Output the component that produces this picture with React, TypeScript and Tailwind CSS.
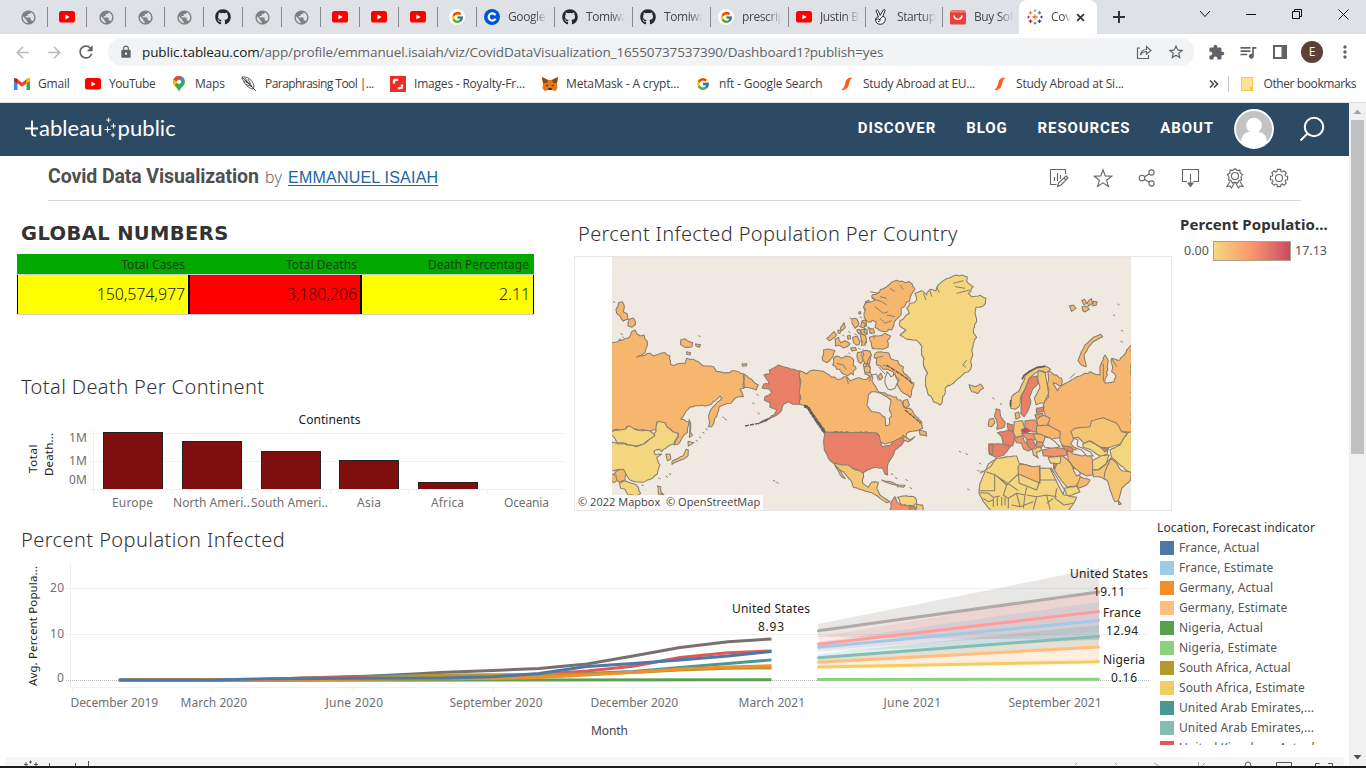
import React from "react";
import { FaGithub } from "react-icons/fa";
import { FcGoogle } from "react-icons/fc";
import {
  MdPublic, MdLock, MdRefresh, MdArrowBack, MdArrowForward, MdStarBorder,
  MdExtension, MdQueueMusic, MdMoreVert,
} from "react-icons/md";

type Pt = [number, number];

/* ---------- browser chrome ---------- */

const Globe = () => <MdPublic className="size-[17px] text-[#808080]" />;
const Tube = () => (
  <svg viewBox="0 0 16 12" className="h-3 w-4"><rect width="16" height="11.6" rx="2.6" fill="#f00" /><path d="M6.4 3.4v5l4.2-2.5z" fill="#fff" /></svg>
);
const Octo = () => <FaGithub className="size-4 text-[#24292e]" />;
const GTab = () => (
  <span className="flex size-4 items-center justify-center rounded-full bg-white"><FcGoogle className="size-[13px]" /></span>
);
const Coursera = () => (
  <svg viewBox="0 0 16 16" className="size-4"><circle cx="8" cy="8" r="8" fill="#0056d2" /><path d="M11.4 6.2A3.6 3.6 0 1 0 11.4 9.8" fill="none" stroke="#fff" strokeWidth="2.2" /></svg>
);
const Bag = () => (
  <svg viewBox="0 0 16 16" className="size-4"><path d="M2 1h12l2 2v11a1.500 1.500 0 0 1-1.500 1.500h-13A1.500 1.500 0 0 1 0 14V3z" fill="#e8413a" /><path d="M2 1h12l2 2.500H0z" fill="#f37b6f" /><path d="M4 6.500c.5 5 7.500 5 8 0" fill="none" stroke="#fff" strokeWidth="1.500" /></svg>
);
const Peace = () => (
  <svg viewBox="0 0 16 16" className="size-4" fill="#fff" stroke="#222" strokeWidth="1" strokeLinejoin="round">
    <path d="M5.500 8L3.200 2.200c-.4-1.300 1.300-1.800 1.800-.7L7.200 6.500 10.300.9c.7-1.100 2.200-.3 1.700.9L9.800 7.500c2 .2 2.800 1.300 2.500 3-.3 2.500-1.800 4.800-5 4.800C4.500 15.300 2.800 13.500 2.600 11c-.1-1.800.9-2.800 2.900-3z" />
    <path d="M3 10.500c1.500-1 3-.8 3.800.5M6.800 11c.3-1.500 1.500-2.800 3-3.500M5 12.800l2.500-1.300" fill="none" />
  </svg>
);
const plus = (x: number, y: number, r: number) => `M${x - r} ${y}h${2 * r}M${x} ${y - r}v${2 * r}`;
const TableauMark = () => (
  <svg viewBox="0 0 16 16" className="size-4 shrink-0" fill="none">
    <path d={plus(8, 8, 2.6)} stroke="#e8762d" strokeWidth="1.4" />
    <path d={plus(3.500, 3.800, 1.800)} stroke="#eb912c" strokeWidth="1.2" />
    <path d={plus(12.500, 3.800, 1.800)} stroke="#5b879b" strokeWidth="1.2" />
    <path d={plus(3.500, 12.200, 1.800)} stroke="#c72035" strokeWidth="1.2" />
    <path d={plus(12.500, 12.200, 1.800)} stroke="#1f457e" strokeWidth="1.2" />
    <path d={plus(8, 1.700, 1.300)} stroke="#7199a6" strokeWidth="1" />
    <path d={plus(8, 14.300, 1.300)} stroke="#5b6591" strokeWidth="1" />
    <path d={plus(1.500, 8, 1.300)} stroke="#7a4a5a" strokeWidth="1" />
    <path d={plus(14.500, 8, 1.300)} stroke="#1f457e" strokeWidth="1" />
  </svg>
);

const smallTabs = [Globe, Tube, Globe, Globe, Globe, Octo, Globe, Globe, Tube, Tube, Tube, GTab];
const wideTabs = [
  { I: Coursera, t: "Google", w: "w-[78px]" }, { I: Octo, t: "Tomiwa", w: "w-[78px]" }, { I: Octo, t: "Tomiwa", w: "w-[78px]" },
  { I: GTab, t: "prescrip", w: "w-[78px]" }, { I: Tube, t: "Justin B", w: "w-[77px]" }, { I: Peace, t: "Startup", w: "w-[77px]" },
  { I: Bag, t: "Buy Sof", w: "w-[76px]" },
];

const TabStrip = () => (
  <div className="flex h-[34px] items-stretch bg-[#dee1e6] pl-[9px] text-[12px] text-[#45494d]">
    {smallTabs.map((I, i) => (
      <div key={i} className="flex w-[39px] shrink-0 items-center justify-center">
        <span className="ml-auto mr-auto"><I /></span>
        <span className="h-5 w-px bg-[#85888c]" />
      </div>
    ))}
    {wideTabs.map(({ I, t, w }, i) => (
      <div key={i} className={`flex shrink-0 items-center pl-[7px] ${w}`}>
        <span className="w-4 shrink-0"><I /></span>
        <span className="ml-2 w-[42px] whitespace-nowrap tracking-[-0.4px] [mask-image:linear-gradient(90deg,#000_60%,transparent_94%)]">{t}</span>
        {i < 6 && <span className="ml-auto h-5 w-px bg-[#85888c]" />}
      </div>
    ))}
    <div className="flex w-[78px] shrink-0 items-center rounded-t-lg bg-white pl-2">
      <TableauMark />
      <span className="ml-2 w-[22px] whitespace-nowrap tracking-[-0.3px] [mask-image:linear-gradient(90deg,#000_60%,transparent_90%)]">Cov</span>
      <svg viewBox="0 0 10 10" className="ml-[3px] size-[9px]" stroke="#333" strokeWidth="1.900"><path d="M1.200 1.200l7.600 7.600M8.800 1.200L1.200 8.800" /></svg>
    </div>
    <div className="flex w-11 items-center justify-center"><svg viewBox="0 0 12 12" className="size-3" stroke="#333" strokeWidth="2"><path d="M0 6h12M6 0v12" /></svg></div>
    <svg viewBox="1141 0 225 34" className="ml-auto w-[225px]" fill="none" stroke="#111" strokeWidth="1">
      <path d="M1200 11l5 5.500 5-5.500M1246 14.500h10M1292.500 11.500h7v7h-7zM1294.500 11.500v-2h7v7h-2M1338.500 9.500l10 10M1348.500 9.500l-10 10" />
    </svg>
  </div>
);

const Toolbar = () => (
  <div className="flex h-[36px] items-center pl-[13px] text-[#5f6368]">
    <MdArrowBack className="size-[19px] text-[#b8bbbe]" />
    <MdArrowForward className="ml-[13px] size-[19px] text-[#b8bbbe]" />
    <MdRefresh className="ml-[12px] size-5" />
    <div className="ml-[12px] flex h-7 w-[1086px] items-center rounded-full bg-[#f1f3f4] pl-[11px]">
      <MdLock className="size-[14px]" />
      <span className="ml-[9px] whitespace-nowrap text-[13.500px] tracking-[-0.115px]"><span className="text-[#202124]">public.tableau.com</span>/app/profile/emmanuel.isaiah/viz/CovidDataVisualization_16550737537390/Dashboard1?publish=yes</span>
      <svg viewBox="0 0 16 16" className="ml-auto size-4" fill="none" stroke="#5f6368" strokeWidth="1.200"><path d="M4 4H1.500v10.500h11V11M4.500 11C5 7 8 5.500 10.500 5.500V2.500L15 6.500 10.500 10V7.500C8 7.500 6 8.500 4.500 11z" /></svg>
      <MdStarBorder className="ml-[15px] mr-[9px] size-[18px]" />
    </div>
    <MdExtension className="ml-[14px] size-[17px]" />
    <MdQueueMusic className="ml-[13px] size-5" />
    <svg viewBox="0 0 14 14" className="ml-[15px] size-[14px]"><path d="M1 1h12v12H1z" fill="none" stroke="#5f6368" strokeWidth="2" /><path d="M8.500 0H14v14H8.500z" fill="#5f6368" /></svg>
    <span className="ml-[14px] flex size-[22px] items-center justify-center rounded-full bg-[#5d4037] text-[12px] text-white">E</span>
    <MdMoreVert className="ml-[12px] size-5" />
  </div>
);

const Gmail = () => (
  <svg viewBox="0 0 16 12" className="h-3 w-4"><path d="M0 1.500V12h3.500V4z" fill="#4285f4" /><path d="M16 1.500V12h-3.500V4z" fill="#34a853" /><path d="M0 1.500C0 0 2 0 3 .8l5 4 5-4C14 0 16 0 16 1.500V3L8 8.800 0 3z" fill="#ea4335" /><path d="M12.500 1.200C14 0 16 0 16 1.500V3l-3.500 2.600z" fill="#fbbc04" /><path d="M0 1.500V3l3.500 2.600V1.200C2 0 0 0 0 1.500z" fill="#c5221f" /></svg>
);
const MapPin = () => (
  <svg viewBox="0 0 12 16" className="h-4 w-3"><path d="M6 0a6 6 0 0 1 6 6c0 4-5 5-6 10C5 11 0 10 0 6a6 6 0 0 1 6-6z" fill="#34a853" /><path d="M6 0C3 0 1 1.500.4 3.800L3.500 6.500 9 .8A6 6 0 0 0 6 0z" fill="#ea4335" /><path d="M9 .8L4 7l4-1 3.500-3A6 6 0 0 0 9 .8z" fill="#4285f4" /><path d="M.4 3.800C-.4 6.500.4 8.200 1.500 9.500L5 6z" fill="#fbbc04" /><circle cx="6" cy="5.800" r="2.100" fill="#fff" /></svg>
);
const Quill = () => (
  <svg viewBox="0 0 16 16" className="size-4" fill="none" stroke="#333" strokeWidth=".8"><path d="M1 1c5-.5 11 2 12 10l-1 2C7 12 3 8 1 1zM1 1l14 14M4 2l4 6M7 3l4 8M3 5l6 3M5 8.500l6 2" /></svg>
);
const Shutter = () => (
  <svg viewBox="0 0 16 16" className="size-4"><path d="M0 0h16v16H0z" fill="#ee2b24" /><path d="M4 7.500V5q0-1.200 1.200-1.200h3M12 8.500V11q0 1.200-1.200 1.200h-3" fill="none" stroke="#fff" strokeWidth="2.300" /></svg>
);
const Fox = () => (
  <svg viewBox="0 0 16 14" className="h-[14px] w-4"><path d="M0 0l6 3h4l6-3-1 6 .5 5-2 3-4-1H6.500l-4 1-2-3L1 6z" fill="#e2761b" /><path d="M0 0l6 3-1 3-4 0zM16 0l-6 3 1 3 4 0z" fill="#8a4717" /><path d="M3.500 7.500l3 1-1.500 1zM12.500 7.500l-3 1 1.500 1z" fill="#233447" /><path d="M6.500 11h3l.5 2H6z" fill="#333" /></svg>
);
const Flash = () => (
  <svg viewBox="0 0 12 14" className="h-[14px] w-3"><path d="M10.500 1C6.500 1.300 5 3 5 5.500L4 8.500C3.500 10 2.500 11.500 1 12.800 4.500 12.300 6.800 11 7 8.500L8 5.500C8.300 3.800 9 2.500 10.500 1z" fill="#ff5c1a" stroke="#ff5c1a" /></svg>
);

const Bookmark = ({ children, label, cls }: { children: React.ReactNode; label: string; cls: string }) => (
  <div className={`flex shrink-0 items-center whitespace-nowrap ${cls}`}>{children}<span className="ml-[8px]">{label}</span></div>
);
const Bookmarks = () => (
  <div className="flex h-[33px] items-center border-b border-[#dadce0] pb-1 pl-[14px] text-[12px] tracking-[-0.2px] text-[#3c4043]">
    <Bookmark label="Gmail" cls="w-[71px]"><Gmail /></Bookmark>
    <Bookmark label="YouTube" cls="w-[88px] tracking-[-0.45px]"><Tube /></Bookmark>
    <Bookmark label="Maps" cls="w-[68px] [&>span]:ml-[10px]"><MapPin /></Bookmark>
    <Bookmark label="Paraphrasing Tool |..." cls="w-[149px] tracking-[-0.55px]"><Quill /></Bookmark>
    <Bookmark label="Images - Royalty-Fr..." cls="w-[152px]"><Shutter /></Bookmark>
    <Bookmark label="MetaMask - A crypt..." cls="w-[154px] tracking-[-0.15px]"><Fox /></Bookmark>
    <Bookmark label="nft - Google Search" cls="w-[145px] tracking-[-0.15px] [&>span]:ml-[9px]"><FcGoogle className="size-[14px]" /></Bookmark>
    <Bookmark label="Study Abroad at EU..." cls="w-[153px] tracking-[-0.28px] [&>span]:ml-[10px]"><Flash /></Bookmark>
    <Bookmark label="Study Abroad at Si..." cls="tracking-[-0.2px] [&>span]:ml-[10px]"><Flash /></Bookmark>
    <svg viewBox="0 0 10 8" className="ml-auto h-2 w-[10px]" fill="none" stroke="#444" strokeWidth="1.500"><path d="M1 .5L4.500 4 1 7.500M5 .5L8.500 4 5 7.500" /></svg>
    <span className="ml-[9px] h-4 w-px bg-[#c8cace]" />
    <svg viewBox="0 0 12 14" className="ml-[12px] h-[14px] w-3"><path d="M.5.500h11v13H.5z" fill="#fde293" stroke="#f2c94c" /><path d="M9 10h3v4H9z" fill="#f2c94c" /></svg>
    <span className="ml-[10px] mr-[10px] tracking-[-0.4px]">Other bookmarks</span>
  </div>
);

/* ---------- tableau public header ---------- */

const Header = () => (
  <header className="flex h-[53px] items-center bg-[#2d4a64] pl-[25px] text-white">
    <div className="flex items-center pb-[3px] font-['Lato',sans-serif] text-[22px] leading-none">
      <svg viewBox="25 118 13 20" className="h-5 w-[13px]"><path d="M25 128.500h13M32 120.500v12.500q0 2.600 2.800 2.600h1.500" stroke="#fff" strokeWidth="1.900" fill="none" /></svg>
      <span className="ml-px tracking-[0.05px]">ableau</span>
      <svg viewBox="105 113 14 24" className="ml-px h-6 w-[14px] self-start" stroke="#fff" strokeWidth="1.100"><path d={plus(109.500, 117, 2.200) + plus(108.500, 126.500, 3) + plus(114.500, 123, 2.400) + plus(114, 132, 2.200)} /></svg>
      <span className="tracking-[0.05px]">public</span>
    </div>
    <nav className="ml-auto flex gap-[30px] pb-[3px] font-['Roboto',sans-serif] text-[15px] font-bold tracking-[0.9px]">
      <span>DISCOVER</span><span>BLOG</span><span>RESOURCES</span><span>ABOUT</span>
    </nav>
    <svg viewBox="0 0 40 40" className="mb-[2px] ml-[20px] size-10"><circle cx="20" cy="20" r="19" fill="#c3c3c3" stroke="#fff" strokeWidth="1.800" /><circle cx="20" cy="16.500" r="7.800" fill="#fff" /><path d="M7 33c1-8 4-9 8-10h10c4 1 7 2 8 10q-6 6-13 6T7 33z" fill="#fff" /></svg>
    <svg viewBox="0 0 26 26" className="mb-[2px] ml-[25px] mr-[24px] size-[26px]" fill="none" stroke="#fff" strokeWidth="2"><circle cx="15" cy="11" r="9.200" /><path d="M8.500 17.500L1.500 24.500" /></svg>
  </header>
);

const star = (cx: number, cy: number, R: number, r: number, n: number) =>
  Array.from({ length: n * 2 }, (_, i) => {
    const a = (i * Math.PI) / n - Math.PI / 2;
    const q = i % 2 ? r : R;
    return `${(cx + q * Math.cos(a)).toFixed(1)},${(cy + q * Math.sin(a)).toFixed(1)}`;
  }).join(" ");

const gear = () => {
  const p: string[] = [];
  for (let i = 0; i < 8; i++)
    for (const [o, r] of [[-0.2, 8.800], [0.2, 8.800], [0.28, 6.900], [0.5, 6.900]] as Pt[]) {
      const a = (i * Math.PI) / 4 + o;
      p.push(`${(1279 + r * Math.cos(a)).toFixed(1)},${(178 + r * Math.sin(a)).toFixed(1)}`);
    }
  return p.join(" ");
};

const TitleRow = () => (
  <div className="ml-12 mr-12 flex h-[45px] items-start border-b border-[#d8d8d8] font-['Liberation_Sans',Arial,sans-serif]">
    <div className="flex w-[400px] items-baseline whitespace-nowrap pt-[8px]">
      <h1 className="w-[211px] font-['Roboto',sans-serif] text-[19.500px] font-bold leading-[25px] tracking-[-0.1px] text-[#4f4f4f]">Covid Data Visualization</h1>
      <span className="ml-[6px] w-[18px] font-['Open_Sans',sans-serif] text-[16px] font-light text-[#555]">by</span>
      <a className="ml-[5px] text-[16px] tracking-[0.22px] text-[#1b66a3] underline underline-offset-2">EMMANUEL ISAIAH</a>
    </div>
    <svg viewBox="1045 156 256 44" className="ml-auto h-11 w-64" fill="none" stroke="#666" strokeWidth="1.100">
      <path d="M1065.500 174v-4.500h-15v15h6M1054.500 181v-4M1057.500 181v-8M1060.500 179v-4M1066 176l2 2-7 7-3.500 1.500 1-3.500zM1064 178l2 2" />
      <polygon points={star(1103, 179, 9.200, 3.800, 5)} />
      <circle cx="1142" cy="178" r="2.800" /><circle cx="1151.500" cy="172.500" r="2.600" /><circle cx="1151.500" cy="183.500" r="2.600" /><path d="M1144.500 176.700l4.700-2.700M1144.500 179.500l4.700 2.700" />
      <path d="M1187 181.500h-4.500v-12h16v12h-5M1190.500 174v10" /><path d="M1188 183h5l-2.500 3.500z" fill="#666" />
      <polygon points={star(1235, 176, 7.600, 6, 9)} /><circle cx="1235" cy="176" r="3.500" /><path d="M1230 181.500l-3 5 3-.5 1.500 2 3-5.500M1240 181.500l3 5-3-.5-1.500 2-3-5.500" />
      <polygon points={gear()} /><circle cx="1279" cy="178" r="3.500" />
    </svg>
  </div>
);

/* ---------- map ---------- */

const parse = (s: string): Pt[] => s.trim().split(/\s+/).map((p) => p.split(",").map(Number) as Pt);

/* Breaks straight coast segments into short wobbling ones. */
const coast = (s: string, amp = 3, step = 8): string => {
  const pts = parse(s);
  let seed = pts.length * 7919 + Math.round(pts[0][0] * 31 + pts[0][1]);
  const rnd = () => {
    seed = (seed * 1103515245 + 12345) & 0x7fffffff;
    return seed / 0x7fffffff - 0.5;
  };
  const out: string[] = [];
  pts.forEach(([x, y], i) => {
    const [nx, ny] = pts[(i + 1) % pts.length];
    const n = Math.max(1, Math.floor(Math.hypot(nx - x, ny - y) / step));
    out.push(`${x},${y}`);
    for (let k = 1; k < n; k++)
      out.push(`${(x + ((nx - x) * k) / n + rnd() * amp * 2).toFixed(1)},${(y + ((ny - y) * k) / n + rnd() * amp * 2).toFixed(1)}`);
  });
  return out.join(" ");
};

const O = "#f6b66e", Y = "#f3d67e", M = "#f4c575", R = "#e97f66", S = "#f1946a", SEA = "#f0e9e2";

const west: [string, string, number?][] = [
  [O, "120,284 150,270 175,265 185,245 195,240 210,258 222,255 232,275 228,295 225,308 200,322 240,310 250,318 285,308 300,318 302,343 312,347 320,342 345,340 350,325 385,335 400,348 430,350 440,365 480,368 485,362 505,365 521,372 521,415 510,418 520,440 495,445 482,460 460,465 448,470 440,500 425,530 416,530 418,490 430,470 455,445 450,438 425,462 405,468 360,470 345,490 332,508 356,515 352,548 325,582 312,584 325,560 325,550 308,545 290,530 285,518 262,515 258,540 240,545 200,538 170,530 165,538 130,540 120,540", 2.5],
  [O, "521,372 545,388 550,395 565,405 558,420 545,415 525,412 521,415", 2],
  [O, "357,508 362,520 361,545 367,556 358,562 360,530", 1],
  [Y, "120,575 140,580 180,585 200,590 225,580 245,560 258,545 258,530 262,515 285,518 290,530 308,545 325,552 312,582 295,588 275,605 268,598 252,603 255,614 275,612 260,622 270,645 262,672 240,688 215,697 195,695 180,690 165,670 150,658 120,662", 1.5],
  [Y, "120,548 135,540 165,538 175,528 200,540 240,543 255,556 238,568 220,583 200,588 165,580 140,578 130,560", 1.5],
  [M, "288,613 300,612 302,628 292,632", 1], [M, "354,574 372,578 355,588", 1], [M, "348,598 355,600 354,617 340,628 320,635 306,643 306,634 325,625 340,617", 1.500],
  [O, "140,662 160,658 168,672 165,690 150,698 140,690 130,675", 2], [Y, "148,700 165,692 185,700 205,712 212,730 195,738 175,735 165,718 152,715", 3], [M, "262,708 272,710 272,725 282,735 266,733", 2],
  [O, "120,668 138,676 142,692 132,698 120,690", 2],
  [O, "146,158 156,155 163,172 160,185 172,192 175,208 160,214 150,198 140,190 138,178", 3], [O, "178,208 190,204 197,222 186,232 174,228", 2],
  [O, "332,270 345,266 355,274 368,278 366,290 345,292 332,284", 2], [O, "376,282 392,284 388,292 378,288", 1], [O, "350,305 362,308 360,315 350,313", 1], [O, "516,342 530,341 530,347 518,349", 1],
  [R, "582,375 600,372 598,360 625,345 640,350 655,354 690,363 690,463 668,463 655,455 642,462 632,485 615,498 590,512 565,522 590,508 612,495 622,480 600,472 600,458 583,450 585,440 605,430 600,418 576,414 582,402 598,402 590,388", 2],
  [O, "690,363 710,372 730,360 750,362 770,370 800,388 830,380 840,392 860,385 890,388 900,378 885,372 882,340 898,345 910,400 925,425 970,440 992,450 1000,470 1020,475 1032,492 1055,515 1058,535 1035,542 1010,550 1004,566 985,568 970,575 945,582 930,575 928,558 915,548 765,547 755,528 735,508 720,482 705,468 690,463", 3],
  [R, "765,547 915,548 928,558 936,590 960,586 970,575 995,562 1008,566 995,585 975,600 970,615 955,638 952,655 953,675 945,672 938,655 915,652 892,660 878,670 865,662 850,655 835,658 815,645 790,640 775,625 763,600 761,570", 1],
  [M, "792,640 815,645 835,645 850,657 868,662 880,670 878,700 895,712 905,696 925,697 920,715 930,735 960,755 950,758 930,745 905,728 878,720 850,712 843,692 820,665 800,655", 1.500],
  [M, "794,645 805,655 814,668 826,686 815,680", 1],
  [O, "760,300 775,297 795,302 790,318 780,330 772,338 758,332", 3],
  [O, "790,325 800,318 815,325 830,318 848,326 856,350 850,375 820,372 800,358 788,345", 5],
  [O, "770,265 792,245 800,255 785,268 778,272", 3], [O, "795,268 806,262 812,278 825,272 840,282 820,294 805,286 796,288", 4],
  [O, "812,232 822,218 826,232 812,244", 3], [O, "804,240 812,242 810,250 804,249", 1],
  [O, "846,206 858,205 866,225 855,235 846,220", 4], [O, "848,262 862,258 870,272 862,286 852,280", 5], [O, "832,258 840,256 842,266 834,268", 2],
  [O, "862,308 876,305 880,326 872,340 862,325", 4], [O, "860,240 868,238 874,248 866,252", 2], [O, "876,212 886,210 890,228 880,230", 3],
  [O, "886,155 897,151 902,168 900,190 888,195 882,175", 5],
  [O, "885,308 900,304 902,325 898,342 884,338", 4], [O, "884,350 898,348 898,368 886,368", 3],
  [O, "872,240 886,236 892,252 880,258 874,250", 3], [O, "874,264 886,262 890,278 878,282", 3], [O, "866,186 872,185 872,192 867,192", 1], [O, "842,294 856,292 860,300 846,303", 2],
];

const east: [string, string, number?][] = [
  [O, "35,140 62,118 78,112 95,97 125,93 155,100 165,117 150,145 130,172 122,195 102,218 95,240 70,245 45,232 48,215 22,215 12,190 18,158 45,150", 5],
  [O, "5,215 16,222 12,234 2,230", 3], [O, "28,262 55,258 75,250 92,258 82,272 84,292 60,296 35,290", 4], [O, "24,232 40,236 44,248 30,250", 3],
  [O, "2,252 18,260 16,285 4,286", 4], [O, "14,236 22,240 20,250 12,247", 2],
  [O, "8,304 28,303 35,315 24,330 20,345 10,330", 4],
  [O, "45,312 62,305 85,308 102,330 130,350 140,375 162,400 155,420 150,443 132,430 116,412 110,400 118,390 102,378 92,362 70,358 50,345", 5],
  [O, "130,452 142,448 148,465 138,475 130,466", 3], [O, "55,378 62,370 68,382 60,390", 3],
  [Y, "118,225 130,207 148,190 140,175 150,160 170,150 165,130 185,122 200,135 210,118 228,122 240,100 250,92 265,85 290,75 322,80 320,95 340,110 325,130 335,140 360,136 378,145 370,168 348,172 345,190 350,215 340,238 350,262 340,280 335,300 335,345 325,365 295,385 280,400 255,415 248,440 240,465 220,455 205,435 197,400 203,370 190,340 186,290 170,270 140,268 120,255 138,240", 4],
  [M, "327,404 345,410 362,402 371,415 352,431 335,425", 2.5],
  [O, "178,540 198,545 200,558 180,555", 2], [O, "128,555 150,570 165,560 145,575 130,570", 2],
  [S, "92,760 105,740 112,758 125,766 145,765 150,785 92,785", 2], [Y, "112,742 130,738 165,742 170,758 160,768 125,765", 2], [M, "170,762 188,765 190,785 165,785", 2], [R, "150,768 165,770 168,785 150,785"], [M, "65,690 95,696 112,706 95,703", 1], [M, "112,704 135,706 130,712 112,710", 1],
  [O, "665,346 654,332 664,305 675,285 700,262 722,253 728,260 700,275 685,292 672,315 678,350", 1.500],
  [O, "628,168 640,165 648,175 635,184", 3], [O, "665,152 674,148 680,160 672,164", 4], [O, "682,158 694,146 698,160 686,168", 4], [O, "666,170 680,168 688,178 674,186", 4], [O, "700,154 712,156 708,166 698,168", 3],
  [O, "565,362 605,385 603,408 580,398 592,422 620,398 660,378 690,365 720,375 722,345 735,315 745,332 742,375 735,400 762,395 768,380 755,365 755,325 780,330 800,300 815,284 815,550 790,545 775,540 640,565 648,600 610,590 600,572 600,545 570,530 555,500 550,465 566,440", 3],
  [M, "450,460 455,440 475,425 490,395 500,372 525,355 555,348 572,358 558,368 540,362 525,370 508,385 500,405 486,432 480,465 465,478 453,475", 2.5],
  [R, "510,383 530,378 535,400 520,415 508,440 513,455 505,480 492,500 482,490 485,440 500,405", 1],
  [M, "535,362 555,368 566,430 552,458 528,464 523,445 540,412 533,385", 1],
  [R, "386,582 430,582 452,590 432,615 408,622 388,612", 1], [R, "388,585 400,585 396,615 388,612"],
  [R, "412,548 430,545 448,540 466,555 462,575 458,588 430,582 425,560", 1], [R, "442,520 460,525 460,545 445,540", 2],
  [S, "408,476 420,480 422,500 436,518 432,532 410,538 412,520 404,500", 2], [O, "388,508 400,505 405,518 395,530 385,528", 2],
  [M, "462,515 488,512 495,540 490,558 468,562 460,548", 1], [O, "465,490 476,486 480,502 468,508", 2],
  [S, "495,512 525,510 533,525 530,545 508,542 494,532", 1], ["#c94a5e", "483,540 497,533 512,542 500,549 488,548"],
  [S, "462,565 488,558 492,572 515,598 505,603 492,598 485,580 470,578", 2], [S, "485,550 530,550 525,570 500,568", 1], [R, "500,570 515,567 528,585 520,602 505,590", 2], [O, "520,553 545,552 562,565 552,578 530,575", 1], [S, "530,575 550,578 545,592 528,592", 1], [M, "516,598 542,592 545,600 530,606 535,625 520,615", 3],
  [S, "525,495 548,490 548,508 530,510", 1], [R, "530,474 552,470 550,485 530,490", 2], [O, "530,508 550,496 570,505 562,528 535,528", 1], [O, "530,528 565,526 600,545 600,562 575,568 560,560 530,548", 1],
  [S, "548,600 575,592 620,598 620,615 595,620 550,618", 1], [R, "605,585 635,592 640,605 620,605", 1],
  [M, "632,545 645,535 690,530 695,512 730,503 770,520 785,545 803,548 780,582 740,595 718,590 690,572 672,580 655,562 640,565", 1],
  [Y, "815,545 803,548 780,585 750,600 755,622 775,640 815,672", 1], [Y, "668,582 690,574 722,592 745,595 742,612 722,620 690,598 670,592", 1], [R, "722,592 745,597 735,606"],
  [O, "622,600 640,612 665,618 690,612 702,640 698,675 680,678 655,665 640,650 625,632", 1],
  [Y, "698,632 722,618 748,615 738,642 715,660 697,658", 1], [M, "697,660 715,660 738,642 752,625 762,640 735,668 740,690 718,680 700,680", 1],
  [M, "752,625 770,640 782,660 815,668 812,690 785,715 775,752 765,755 750,720 742,692 732,685 735,665", 1], [M, "775,752 784,762 776,764"],
  [M, "585,620 608,618 625,632 640,655 665,685 650,708 620,712 600,685 580,655", 1], [O, "662,680 690,690 680,705 655,715 650,706", 2], [Y, "612,715 650,708 660,725 622,740", 1], [Y, "565,622 602,618 600,640 572,640", 1], [R, "580,640 590,642 584,658"],
  [Y, "385,642 410,625 470,618 478,640 500,645 530,655 575,655 590,690 612,735 650,742 640,762 620,790 400,790 370,755 357,730 360,700 372,672", 1],
  [O, "474,650 480,642 500,645 515,650 538,648 540,700 475,672"],
];

const waters = "895,435 905,425 925,428 950,440 962,450 958,480 965,498 958,505 958,525 947,527 945,502 930,490 905,485 890,465";
const borders = "M378 665L408 676 475 722M408 625L392 650 360 670M404 676V722H360M475 672L440 705 408 676M540 645V690H590M540 690L530 720 478 700 475 672M440 706L430 735 445 745 470 730 495 735 500 712M420 738L400 742 385 730 360 728M400 742V770M412 742V768M425 740V768M435 742V766M445 745V775M470 732L480 768M495 735L490 775M500 735L530 740 560 735 590 740M530 740L520 778M560 735L570 778M590 715L585 745 612 765 640 760M580 745L560 760M370 745L385 755 400 750M455 765L480 770 520 755";

const specks: [number, number][] = [
  [132, 156], [155, 252], [160, 262], [150, 268], [388, 258], [550, 460], [566, 490], [562, 434], [460, 502], [467, 508], [410, 538], [400, 548], [390, 562], [380, 572], [300, 672], [290, 680], [612, 692], [622, 698], [268, 685], [218, 706],
  [820, 256], [838, 246], [856, 252], [870, 230], [838, 310], [868, 296], [880, 300], [905, 250], [908, 296], [900, 236], [912, 262], [842, 205], [872, 202],
  [1270, 445], [1293, 462], [1170, 605], [1190, 612], [1225, 662], [1235, 664], [1195, 718], [1022, 714], [1645, 163], [1632, 196], [1656, 242], [1655, 275], [1230, 640], [1010, 690], [978, 684], [966, 672],
];

const Poly = ({ d, dx = 0 }: { d: [string, string, number?]; dx?: number }) => (
  <polygon points={d[2] ? coast(d[1], d[2]) : d[1]} fill={d[0]} transform={dx ? `translate(${dx} 0)` : undefined} />
);

const WorldMap = () => (
  <svg viewBox="575 257 596 253" className="h-full w-full">
    <defs><clipPath id="tiles"><rect x="612" y="257" width="519" height="253" /></clipPath></defs>
    <rect x="612" y="257" width="519" height="253" fill={SEA} />
    <g clipPath="url(#tiles)">
      <g transform="translate(570 250) scale(.33333)" stroke="#8a7f6e" strokeWidth="3.200" strokeLinejoin="round">
        {west.map((d, i) => <Poly key={i} d={d} />)}
        {east.map((d, i) => <Poly key={i} d={d} dx={870} />)}
        <g fill={SEA}>
          <polygon points={coast(waters, 2)} />
          <polygon points={coast("950,365 962,380 975,370 985,395 975,415 955,418 945,400", 4)} />
          <polygon points={coast("1425,562 1440,564 1455,575 1470,590 1450,594 1425,592 1418,582", 1)} />
          <polygon points={coast("1512,565 1524,570 1522,588 1530,592 1560,605 1570,618 1550,618 1535,600 1512,592 1502,580", 1)} />
          <polygon points="1508,652 1525,662 1532,672 1520,678 1512,664" />
          <polygon points="1440,655 1450,665 1484,720 1478,732 1462,700" />
        </g>
        <path d={borders} transform="translate(870 0)" fill="none" />
        <g fill="none" stroke="#655d58">
          <path d="M703 468L714 472 722 486 735 505 748 524 764 548" strokeWidth="9" strokeDasharray="11 1.500" />
          <path d="M703 468L714 472 722 486 735 505 748 524 764 548" strokeWidth="4" />
          <path d="M950 345L985 368 1010 385 1028 402" strokeWidth="4" strokeDasharray="14 2" />
          <path d="M1356 388L1362 376 1380 363 1400 353 1425 349" strokeWidth="5" />
          <path d="M1322 450V470" strokeWidth="5" />
          <path d="M525 528L565 520 600 505" strokeWidth="4" strokeDasharray="12 3" />
          <path d="M1005 480L1030 500 1052 520" strokeWidth="4" strokeDasharray="12 2" />
        </g>
        <g fill="none" strokeWidth="3">
          <path d="M898 395L905 375 920 372 925 392M830 382L835 402M905 145L935 155 950 165M915 170L940 190 955 185M930 205L945 220 965 212M1060 130L1068 150M1080 122L1085 140M1100 110L1108 128M1150 100L1180 92M1155 110L1185 115M1160 130L1200 120M1190 330L1178 345 1188 352M1060 345L1072 370M915 325L940 318M938 345L960 352M1600 340V395M1625 325L1640 350M1500 385L1515 370M900 125L925 130M960 115L975 125M990 105L1000 118M930 140L950 145M950 195L975 200M925 350L945 372M800 340L820 345 830 360" />
        </g>
        {specks.map(([x, y], i) => <path key={i} d={`M${x - 3} ${y - 1}l4 1 2 3`} fill="none" strokeWidth="3" />)}
      </g>
    </g>
  </svg>
);

/* ---------- charts ---------- */

type LabelProps = { x: number; y: number; w: number; children: string; fill?: string; size?: number };
const Label = ({ x, y, w, children, fill = "#707070", size = 12 }: LabelProps) => (
  <text x={x} y={y} textLength={w} fontSize={size} fill={fill}>{children}</text>
);

const bars = [
  { x: 103, top: 432.500, label: "Europe", lx: 112, w: 41 },
  { x: 182, top: 441.500, label: "North Ameri..", lx: 173, w: 77 },
  { x: 261, top: 451.500, label: "South Ameri..", lx: 251, w: 77 },
  { x: 339, top: 460.500, label: "Asia", lx: 357, w: 24 },
  { x: 418, top: 482.500, label: "Africa", lx: 431, w: 33 },
  { x: 497, top: 489.500, label: "Oceania", lx: 504, w: 45 },
];

const BarChart = () => (
  <svg viewBox="17 410 549 105" className="h-[105px] w-[549px]">
    <path d="M90 433.500H566M90 461.500H566M90 489.500H566M93.500 430V494M172.500 489v5M251.500 489v5M330.500 489v5M408.500 489v5M487.500 489v5" stroke="#f0f0f0" />
    {bars.slice(0, 5).map((b) => (
      <g key={b.x}><rect x={b.x} y={b.top - 0.5} width="60" height={489 - b.top + 0.5} fill="#7f0f0f" /><path d={`M${b.x + 0.5} 489V${b.top}H${b.x + 59.500}V489`} fill="none" stroke="#222" /></g>
    ))}
    {bars.map((b) => <Label key={b.label} x={b.lx} y={507} w={b.w}>{b.label}</Label>)}
    <Label x={298.500} y={424} w={62} fill="#222">Continents</Label>
    <Label x={69} y={442} w={18}>1M</Label><Label x={69} y={465} w={18}>1M</Label><Label x={69} y={484} w={18}>0M</Label>
    <g transform="translate(37 473) rotate(-90)"><Label x={0} y={0} w={28.500} size={11.500} fill="#222">Total</Label></g>
    <g transform="translate(53 476) rotate(-90)"><Label x={0} y={0} w={43} size={11.500} fill="#222">Death...</Label></g>
  </svg>
);

const series = [
  { c: "#79706e", d: "120,680 259,679.500 305,678.500 353,677 399,674.700 446,672.300 493,670.500 539,668.500 587,664 633,656 680,647.500 728,641.700 770,639" },
  { c: "#59a14f", d: "121,680.300 770,679.700" },
  { c: "#499894", d: "121,680.300 259,679.500 305,678 353,676.500 399,676 446,675.500 493,675.500 539,675 587,673.500 633,671.500 680,667.500 728,663.500 770,660" },
  { c: "#e15759", d: "121,680.300 259,679.500 305,678 353,677.500 446,677.500 493,677 539,674.500 587,671 633,666.300 680,657.500 728,652.800 770,651" },
  { c: "#b6992d", d: "121,680.300 305,680 353,679 399,676.500 446,675 493,674.800 539,674.800 587,674 633,672.500 680,670 728,668.300 770,668" },
  { c: "#f28e2b", d: "121,680.300 259,679.500 399,679 493,678.500 539,677.500 587,675 633,672.300 680,669 728,667 770,665.700" },
  { c: "#4e79a7", d: "121,680 212,680 259,679 353,678.300 446,678 493,676.800 539,673.500 587,666.500 633,663.500 680,660 728,656 770,651.700" },
];
const forecasts = [
  { c: "#b2aaa7", b: "#7d6c68", a: 630.700, z: 592, band: [624, 568, 640, 637] },
  { c: "#ff9d9a", b: "#ff7a76", a: 644.300, z: 611.500, band: [637, 590, 632, 650] },
  { c: "#a0cbe8", b: "#6fa8d0", a: 647.300, z: 620.500, band: [642, 602, 640, 652] },
  { c: "#86bcb6", b: "#499894", a: 657.700, z: 636.500, band: [654, 625, 648, 661] },
  { c: "#ffbe7d", b: "#ff9d45", a: 662.300, z: 647, band: [659, 636, 660, 665.500] },
  { c: "#f1ce63", b: "#f1ce63", a: 667, z: 661.700, band: [665, 658.500, 665, 669.500] },
  { c: "#8cd17d", b: "#8cd17d", a: 679.500, z: 679.200, band: [679, 678, 681, 681] },
];

const LineChart = () => (
  <svg viewBox="17 556 1133 190" className="h-[190px] w-[1133px]">
    <path d="M66 588.500H1149M66 634.500H1149M70.500 562V687.500H1149M72.500 687v5M212.500 687v5M353.500 687v5M493.500 687v5M633.500 687v5M770.500 687v5M911.500 687v5M1052.500 687v5" fill="none" stroke="#f0f0f0" />
    <path d="M66 680.500H1149" stroke="#b8b8b8" strokeDasharray="1 1" />
    {forecasts.map((f) => <path key={f.c} d={`M818 ${f.band[0]}L1099 ${f.band[1]}V${f.band[2]}L818 ${f.band[3]}z`} fill={f.b} fillOpacity=".17" />)}
    <g fill="none" strokeWidth="3" strokeLinejoin="round">
      {series.map((s) => <polyline key={s.c} points={s.d} stroke={s.c} strokeLinecap="square" />)}
      {forecasts.map((f) => <path key={f.c} d={`M818.500 ${f.a}L1098.500 ${f.z}`} stroke={f.c} strokeLinecap="round" />)}
    </g>
    <Label x={50} y={592} w={14}>20</Label><Label x={50} y={638} w={14}>10</Label><Label x={57} y={682} w={7}>0</Label>
    <Label x={70.500} y={707} w={87.500}>December 2019</Label><Label x={180.500} y={707} w={66.500}>March 2020</Label><Label x={325.500} y={707} w={57.500}>June 2020</Label>
    <Label x={449.500} y={707} w={93}>September 2020</Label><Label x={590.500} y={707} w={87.500}>December 2020</Label><Label x={738.500} y={707} w={66.500}>March 2021</Label>
    <Label x={883.500} y={707} w={57.500}>June 2021</Label><Label x={1008.500} y={707} w={93}>September 2021</Label>
    <Label x={591} y={735} w={37} fill="#444">Month</Label>
    <Label x={732} y={613} w={78} fill="#222">United States</Label><Label x={758} y={631} w={26} fill="#222">8.93</Label>
    <Label x={1070} y={578} w={78} fill="#222">United States</Label><Label x={1093} y={596} w={32} fill="#222">19.11</Label>
    <Label x={1103} y={617} w={38} fill="#222">France</Label><Label x={1106} y={635} w={32} fill="#222">12.94</Label>
    <Label x={1103} y={664} w={42} fill="#222">Nigeria</Label><Label x={1111} y={682} w={26} fill="#222">0.16</Label>
    <g transform="translate(37 686) rotate(-90)"><Label x={0} y={0} w={120} size={11.500} fill="#222">Avg. Percent Popula...</Label></g>
  </svg>
);

const legend = [
  ["#4e79a7", "France, Actual"], ["#a0cbe8", "France, Estimate"], ["#f28e2b", "Germany, Actual"], ["#ffbe7d", "Germany, Estimate"],
  ["#59a14f", "Nigeria, Actual"], ["#8cd17d", "Nigeria, Estimate"], ["#b6992d", "South Africa, Actual"], ["#f1ce63", "South Africa, Estimate"],
  ["#499894", "United Arab Emirates,..."], ["#86bcb6", "United Arab Emirates,..."], ["#e15759", "United Kingdom, Actual"],
];

const Dashboard = () => (
  <div className="flex h-[556px] flex-col font-['Noto_Sans','Open_Sans',sans-serif] text-[#333]">
    <div className="flex h-[318px]">
      <section className="w-[574px] pl-[17px]">
        <h2 className="mt-[19px] pl-1 font-['DejaVu_Sans','Noto_Sans',sans-serif] text-[19.500px] font-bold leading-[27px] tracking-[0.38px]">GLOBAL NUMBERS</h2>
        <div className="mt-[7px] grid w-[517px] grid-cols-[172px_172px_173px] bg-[#00a800] text-right text-[12px] leading-[21px] tracking-[0.08px] text-[#1d3d1d]">
          <span className="h-5 pr-1">Total Cases</span><span className="h-5 pr-1">Total Deaths</span><span className="h-5 pr-[5px] tracking-normal">Death Percentage</span>
        </div>
        <div className="grid h-[41px] w-[517px] grid-cols-[172px_172px_173px] border-y border-[#ccc] text-right text-[16px] font-light leading-[39px] tracking-[-0.1px] text-[#222]">
          <span className="border-l border-r border-black bg-[#ff0] pr-[3px]">150,574,977</span>
          <span className="border-x border-black bg-[#f00] pr-[3px] text-[#500]">3,180,206</span>
          <span className="border-x border-black bg-[#ff0] pr-[3px]">2.11</span>
        </div>
        <h2 className="mt-[58px] pl-1 text-[20px] font-light leading-[27px] tracking-[0.4px]">Total Death Per Continent</h2>
        <div className="mt-[10px]"><BarChart /></div>
      </section>
      <section className="w-[598px]">
        <h2 className="mt-[19px] pl-1 text-[20px] font-light leading-[27px] tracking-[0.35px]">Percent Infected Population Per Country</h2>
        <div className="relative mt-[9px] h-[255px] border border-[#e6e6e6]">
          <WorldMap />
          <div className="absolute bottom-0 left-0 h-[15px] whitespace-nowrap bg-white/75 px-[3px] font-['Open_Sans',sans-serif] text-[11px] leading-[14px] tracking-[0.03px] text-[#444]">© 2022 Mapbox&nbsp; © OpenStreetMap</div>
        </div>
      </section>
      <section className="pl-[8px] pt-[12px]">
        <h3 className="whitespace-nowrap text-[15px] font-bold leading-[22px] tracking-[0.1px]">Percent Populatio...</h3>
        <div className="mt-[6px] flex items-center pl-1 text-[12.500px] leading-5 text-[#555]">
          <span className="w-[29px]">0.00</span>
          <span className="h-5 w-[78px] border border-[#aaa588] bg-linear-to-r from-[#f4d77f] via-[#f8966c] to-[#c94a63]" />
          <span className="pl-1">17.13</span>
        </div>
      </section>
    </div>
    <div className="flex h-[238px]">
      <section className="w-[1150px] pl-[17px]">
        <h2 className="mt-[7px] pl-1 text-[20px] font-light leading-[27px] tracking-[0.42px]">Percent Population Infected</h2>
        <div className="mt-[3px]"><LineChart /></div>
      </section>
      <section className="h-[226px] w-[180px] overflow-hidden pl-[7px] text-[12px] tracking-[0.1px] text-[#555]">
        <h3 className="whitespace-nowrap leading-[18px] text-[#333]">Location, Forecast indicator</h3>
        <div className="pt-px">
          {legend.map(([c, t], i) => (
            <div key={i} className="flex h-5 items-center whitespace-nowrap pl-[3px] leading-5">
              <svg viewBox="0 0 14 14" className="mr-[5px] size-[14px] shrink-0"><rect width="14" height="14" fill={c} /></svg>
              <span>{t}</span>
            </div>
          ))}
        </div>
      </section>
    </div>
  </div>
);

const VizFooter = () => (
  <div className="mx-[5px] flex h-[9px] items-start overflow-hidden bg-[#f5f5f5]">
    <svg viewBox="5 757 1339 9" className="h-[9px] w-[1339px]" fill="none" stroke="#555" strokeWidth="1">
      <path d="M24 764.500h4M26 762v4M30.500 760.500v3M29 762h3M34 764.500h4M36 762v4M49.500 763v3M75.500 763v3M88.500 761v5" />
      <path d="M1075 765l2-2M1117 765l-2-2M1154 763l5 3M1198.500 762v4M1205 763l-3 3" stroke="#aaa" />
      <path d="M1245 766q0-4 3-4t3 4M1276.500 766v-3.500h15v3.500M1315.500 766v-2.500h4M1328 763.500h4.500v2.500" />
    </svg>
  </div>
);

const Scrollbar = () => (
  <div className="flex w-[17px] shrink-0 flex-col items-center bg-[#f1f1f1]">
    <svg viewBox="0 0 17 17" className="size-[17px]"><path d="M4.500 11h8l-4-4.500z" fill="#a3a3a3" /></svg>
    <div className="h-[334px] w-[13px] bg-[#c1c1c1]" />
    <svg viewBox="0 0 17 17" className="mt-auto size-[17px]"><path d="M4.500 6h8l-4 4.500z" fill="#505050" /></svg>
  </div>
);

export default function App() {
  return (
    <div className="flex h-[768px] w-[1366px] flex-col overflow-hidden bg-white font-['Open_Sans','Noto_Sans',sans-serif]">
      <TabStrip />
      <Toolbar />
      <Bookmarks />
      <div className="flex h-[663px]">
        <main className="w-[1349px]">
          <Header />
          <TitleRow />
          <Dashboard />
          <VizFooter />
        </main>
        <Scrollbar />
      </div>
      <div className="h-[2px] bg-[#1c1c1c]" />
    </div>
  );
}
